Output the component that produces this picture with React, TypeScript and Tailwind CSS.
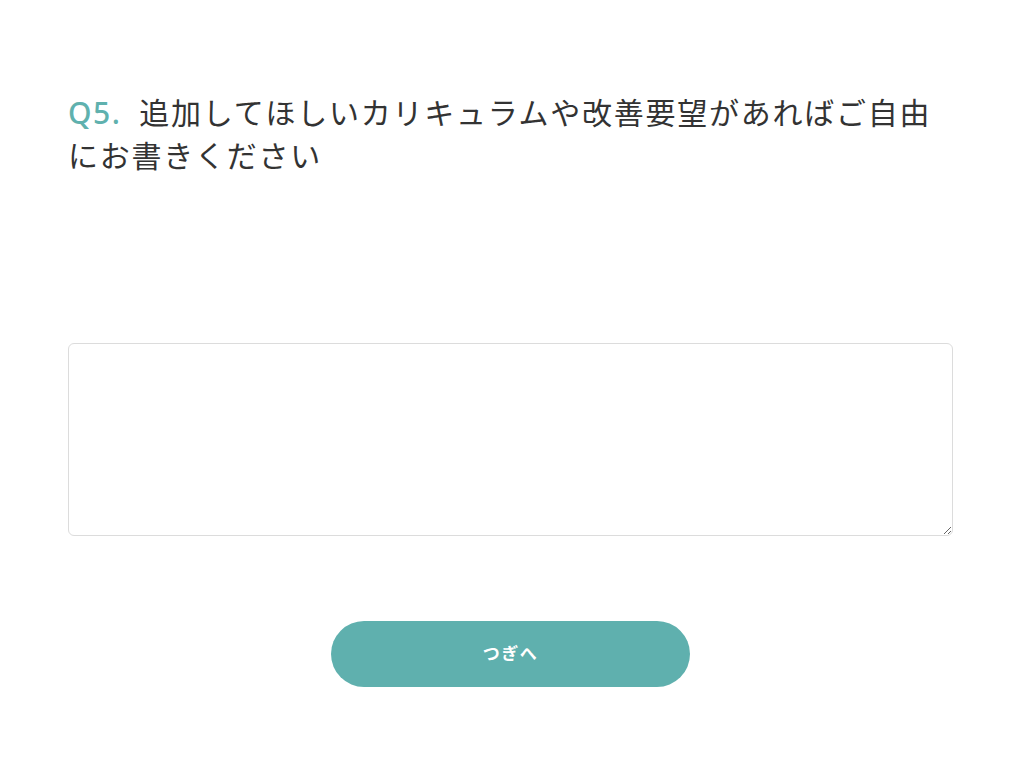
import React from "react";

export default function App() {
  return (
    <div className="min-h-[761px] w-[1024px] bg-white pl-[68px] pr-[71px] pt-[91px]" style={{ fontFamily: '"Noto Sans", "Noto Sans CJK JP", sans-serif' }}>
      <h1 className="text-[30px] leading-[43px] tracking-[1.75px] font-normal text-[#333333]">
        <span className="font-medium text-[#5fb1ae] tracking-[1.5px] mr-[18px]">Q5.</span>
        追加してほしいカリキュラムや改善要望があればご自由にお書きください
      </h1>
      <div className="mt-[166px]">
        <textarea className="block w-full h-[193px] rounded-[6px] border border-[#dcdcdc] bg-white resize-y outline-none p-3 text-[16px]" />
      </div>
      <div className="mt-[85px] flex justify-center">
        <button className="w-[359px] h-[66px] rounded-full bg-[#5fb0ae] text-white text-[17px] font-bold tracking-[1.5px]">
          つぎへ
        </button>
      </div>
    </div>
  );
}
